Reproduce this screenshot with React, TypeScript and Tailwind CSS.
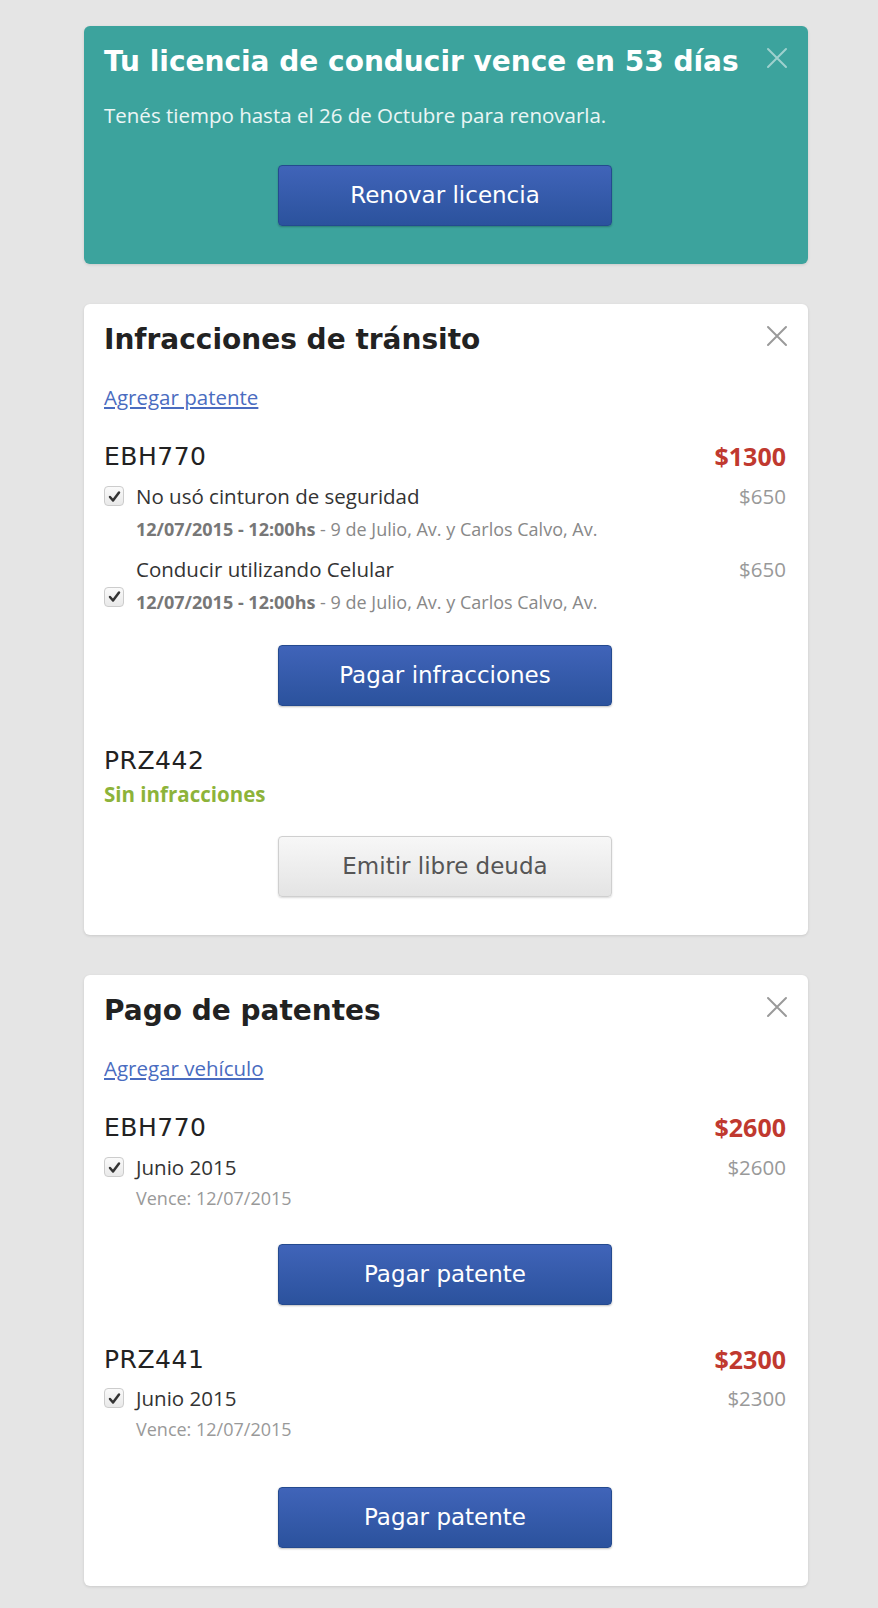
import React from 'react';

const head = "font-['DejaVu_Sans','Open_Sans',sans-serif]";
const body = "font-['Open_Sans','Noto_Sans',sans-serif]";

function CloseIcon({ light }: { light?: boolean }) {
  return (
    <svg width="22" height="22" viewBox="0 0 22 22" className="shrink-0">
      <path
        d="M2 2 L20 20 M20 2 L2 20"
        stroke={light ? 'rgba(255,255,255,0.5)' : '#9a9a9a'}
        strokeWidth="2"
        strokeLinecap="round"
      />
    </svg>
  );
}

function Check() {
  return (
    <div className="w-[20px] h-[20px] shrink-0 rounded-[4px] border border-[#cccccc] bg-gradient-to-b from-[#fafafa] to-[#e9e9e9] flex items-center justify-center">
      <svg width="13" height="13" viewBox="0 0 13 13">
        <path d="M2 7 L5 10.5 L11 2.5" fill="none" stroke="#333" strokeWidth="2.5" strokeLinecap="round" strokeLinejoin="round" />
      </svg>
    </div>
  );
}

function BlueButton({ label }: { label: string }) {
  return (
    <div className="flex justify-center">
      <button className={`${head} w-[334px] h-[61px] rounded-[4px] border border-[#244a8f] bg-gradient-to-b from-[#4064b9] to-[#2b529d] text-white text-[23px] shadow-[0_1px_2px_rgba(0,0,0,0.25)]`}>
        {label}
      </button>
    </div>
  );
}

function Card({ title, onTeal, children }: { title: string; onTeal?: boolean; children: React.ReactNode }) {
  return (
    <section
      className={`w-[724px] rounded-[6px] pl-5 pr-[22px] pt-[19px] pb-[38px] shadow-[0_1px_3px_rgba(0,0,0,0.12)] ${
        onTeal ? 'bg-[#3ca39d]' : 'bg-white'
      }`}
    >
      <div className="flex items-start justify-between">
        <h2 className={`${head} text-[28px] leading-[34px] font-bold ${onTeal ? 'text-white' : 'text-[#222]'}`}>{title}</h2>
        <div className="pt-[2px] -mr-[2px]">
          <CloseIcon light={onTeal} />
        </div>
      </div>
      {children}
    </section>
  );
}

function Plate({ plate, total }: { plate: string; total?: string }) {
  return (
    <div className="flex items-center justify-between h-[28px]">
      <span className={`${head} text-[25px] tracking-[0.02em] text-[#222]`}>{plate}</span>
      {total && <span className={`${body} text-[25px] font-bold text-[#c0392f]`}>{total}</span>}
    </div>
  );
}

function Infraction({ name, checkMid }: { name: string; checkMid?: boolean }) {
  return (
    <div className={`flex gap-[12px] ${checkMid ? 'items-center' : 'items-start'}`}>
      <div className={checkMid ? 'pt-[24px]' : 'pt-[2px]'}>
        <Check />
      </div>
      <div className="flex-1">
        <div className="flex justify-between">
          <span className={`${body} text-[20.5px] leading-[24px] text-[#333]`}>{name}</span>
          <span className={`${body} text-[20.5px] leading-[24px] text-[#999]`}>$650</span>
        </div>
        <p className={`${body} text-[18px] leading-[20px] mt-[11px] text-[#888]`}>
          <span className="font-bold text-[#777]">12/07/2015 - 12:00hs</span> - 9 de Julio, Av. y Carlos Calvo, Av.
        </p>
      </div>
    </div>
  );
}

function Patente({ amount }: { amount: string }) {
  return (
    <div className="flex gap-[12px] items-start">
      <div className="pt-[2px]">
        <Check />
      </div>
      <div className="flex-1">
        <div className="flex justify-between">
          <span className={`${body} text-[20.5px] leading-[24px] text-[#333]`}>Junio 2015</span>
          <span className={`${body} text-[20.5px] leading-[24px] text-[#999]`}>{amount}</span>
        </div>
        <p className={`${body} text-[18px] leading-[20px] mt-[9px] text-[#999]`}>Vence: 12/07/2015</p>
      </div>
    </div>
  );
}

export default function App() {
  return (
    <div className="min-h-[1608px] bg-[#e5e5e5] pt-[26px] pb-[21px] pl-[84px] flex flex-col gap-[40px]">
      {/* License banner */}
      <Card title="Tu licencia de conducir vence en 53 días" onTeal>
        <p className={`${body} text-[20.5px] leading-[24px] text-white/90 mt-[24px]`}>
          Tenés tiempo hasta el 26 de Octubre para renovarla.
        </p>
        <div className="mt-[38px]">
          <BlueButton label="Renovar licencia" />
        </div>
      </Card>

      {/* Infracciones */}
      <Card title="Infracciones de tránsito">
        <a href="#" className={`${body} block mt-[28px] text-[20.5px] leading-[24px] text-[#4a6cc0] underline underline-offset-2`}>
          Agregar patente
        </a>
        <div className="mt-[34px]">
          <Plate plate="EBH770" total="$1300" />
        </div>
        <div className="mt-[13px]">
          <Infraction name="No usó cinturon de seguridad" />
        </div>
        <div className="mt-[18px]">
          <Infraction name="Conducir utilizando Celular" checkMid />
        </div>
        <div className="mt-[33px]">
          <BlueButton label="Pagar infracciones" />
        </div>
        <div className="mt-[41px]">
          <Plate plate="PRZ442" />
        </div>
        <p className={`${body} mt-[8px] text-[20.5px] leading-[22px] font-bold text-[#8db33a]`}>Sin infracciones</p>
        <div className="mt-[31px] flex justify-center">
          <button className={`${head} w-[334px] h-[61px] rounded-[4px] border border-[#cfcfcf] bg-gradient-to-b from-[#f7f7f7] to-[#e4e4e4] text-[#555] text-[23px] shadow-[0_1px_2px_rgba(0,0,0,0.15)]`}>
            Emitir libre deuda
          </button>
        </div>
      </Card>

      {/* Patentes */}
      <Card title="Pago de patentes">
        <a href="#" className={`${body} block mt-[28px] text-[20.5px] leading-[24px] text-[#4a6cc0] underline underline-offset-2`}>
          Agregar vehículo
        </a>
        <div className="mt-[34px]">
          <Plate plate="EBH770" total="$2600" />
        </div>
        <div className="mt-[13px]">
          <Patente amount="$2600" />
        </div>
        <div className="mt-[36px]">
          <BlueButton label="Pagar patente" />
        </div>
        <div className="mt-[41px]">
          <Plate plate="PRZ441" total="$2300" />
        </div>
        <div className="mt-[12px]">
          <Patente amount="$2300" />
        </div>
        <div className="mt-[48px]">
          <BlueButton label="Pagar patente" />
        </div>
      </Card>
    </div>
  );
}
